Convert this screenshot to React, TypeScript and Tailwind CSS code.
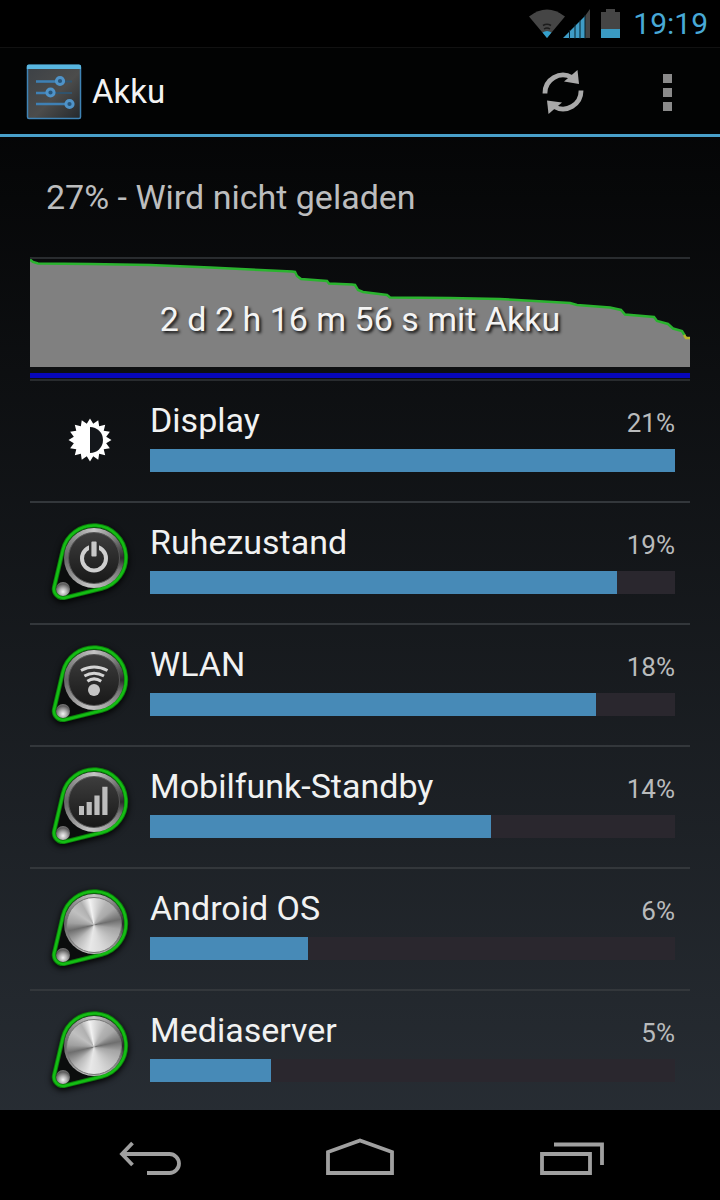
import type { ReactNode } from "react";

type UsageItem = {
  name: string;
  percent: number;
  bar: number;
  icon: ReactNode;
};

const CURVE =
  "0,0.5 3,3 8,4.5 60,5 120,6 180,8.5 230,11 262,12.5 265,13 267,17 271,20 297,22 299,24.5 322,25.5 325,26 328,31 333,33 357,36 360,38.5 420,39 470,40 540,44 547,46 580,48.5 591,51 595,55.5 624,58 627,62 638,65 643,69.5 652,72 655,77";

const GEAR = Array.from({ length: 32 }, (_, i) => {
  const angle = (i * Math.PI) / 16;
  const radius = i % 2 === 0 ? 21.5 : 16.5;
  return `${40 + radius * Math.sin(angle)},${42 - radius * Math.cos(angle)}`;
}).join(" ");

function DisplayIcon() {
  return (
    <svg className="size-20 shrink-0" viewBox="0 0 80 80" aria-hidden="true">
      <polygon points={GEAR} fill="#fff" />
      <path d="M40 29a13 13 0 0 1 0 26z" fill="#14171b" />
    </svg>
  );
}

function KnobIcon({ children }: { children?: ReactNode }) {
  return (
    <div className="relative size-20 shrink-0" aria-hidden="true">
      <svg className="size-20 drop-shadow-[0_2px_3px_#000]" viewBox="0 0 80 80">
        <path
          d="M12.8 30.2A32 32 0 1 1 51.8 68.5L15.2 77.7A9 9 0 0 1 4.2 67Z"
          fill="#0b0d0d"
          stroke="#0b7d0b"
          strokeWidth="4.4"
        />
        <path
          d="M12.8 30.2A32 32 0 1 1 51.8 68.5L15.2 77.7A9 9 0 0 1 4.2 67Z"
          fill="none"
          stroke="#14bd14"
          strokeWidth="2.6"
        />
      </svg>
      <div className="absolute top-[62px] left-[6px] size-[14px] rounded-full bg-[radial-gradient(circle_at_50%_70%,#f4f4f4_0%,#b5b5b5_30%,#5c5c5c_65%,#999_100%)]" />
      <div className="absolute top-[8px] left-[14px] size-[60px] rounded-full bg-[conic-gradient(from_0deg,#c4c4c4_0deg,#8a8a8a_40deg,#2c2c2c_90deg,#777_115deg,#aaa_160deg,#c4c4c4_190deg,#999_225deg,#666_270deg,#8a8a8a_310deg,#c4c4c4_360deg)]" />
      {children ? (
        <>
          <div className="absolute top-[12px] left-[18px] size-[52px] rounded-full border border-[#555] bg-linear-to-b from-[#3d3d3d] to-[#191919]" />
          <svg className="absolute inset-0 size-20" viewBox="0 0 80 80">
            {children}
          </svg>
        </>
      ) : (
        <div className="absolute top-[11px] left-[16px] size-[56px] rounded-full border border-[#777] bg-[conic-gradient(from_0deg,#e0e0e0_0deg,#b4b4b4_30deg,#a8a8a8_50deg,#6e6e6e_78deg,#a5a5a5_100deg,#c0c0c0_130deg,#dcdcdc_165deg,#e8e8e8_190deg,#b8b8b8_225deg,#6e6e6e_257deg,#a0a0a0_275deg,#c0c0c0_305deg,#b0b0b0_330deg,#f2f2f2_350deg,#e0e0e0_360deg)]" />
      )}
    </div>
  );
}

const items: UsageItem[] = [
  { name: "Display", percent: 21, bar: 100, icon: <DisplayIcon /> },
  {
    name: "Ruhezustand",
    percent: 19,
    bar: 89,
    icon: (
      <KnobIcon>
        <circle cx="44" cy="38.5" r="12" fill="none" stroke="#cfcfcf" strokeWidth="4" />
        <rect x="39" y="22" width="10" height="12" fill="#303030" />
        <rect x="41.4" y="21.5" width="5.2" height="15" rx="1" fill="#c8c8c8" />
      </KnobIcon>
    ),
  },
  {
    name: "WLAN",
    percent: 18,
    bar: 85,
    icon: (
      <KnobIcon>
        <g fill="none" stroke="#d4d4d4" strokeWidth="3">
          <path d="M31 28.5Q44 21.5 57.5 28.5" />
          <path d="M34.4 34Q44 28.5 54 34" />
          <path d="M37.4 39.2Q44 34.5 51.2 39.2" />
        </g>
        <circle cx="44" cy="48" r="6" fill="#c4c4c4" />
      </KnobIcon>
    ),
  },
  {
    name: "Mobilfunk-Standby",
    percent: 14,
    bar: 65,
    icon: (
      <KnobIcon>
        <path
          d="M29 42h5v9h-5zM36.6 38h5.2v13h-5.2zM44.4 31.5h5.2V51h-5.2zM52.3 22.7h5.2V51h-5.2z"
          fill="#bdbdbd"
        />
      </KnobIcon>
    ),
  },
  { name: "Android OS", percent: 6, bar: 30, icon: <KnobIcon /> },
  { name: "Mediaserver", percent: 5, bar: 23, icon: <KnobIcon /> },
];

function StatusBar() {
  return (
    <div className="flex h-12 items-center justify-end border-b border-[#111] bg-black pr-3">
      <svg className="h-8 w-[98px]" viewBox="0 0 98 32" aria-hidden="true">
        <path d="M2 8.5Q20 -5.5 38 8.5L20 30Z" fill="#454545" />
        <path d="M16 17.5Q20 15 24 17.5M17 21Q20 19 23 21" fill="none" stroke="#1c1c1c" strokeWidth="1.5" />
        <path d="M15.5 24.5Q20 21.5 24.5 24.5L20 30Z" fill="#33a0cc" />
        <path d="M36 30L58 8V30Z" fill="#3f9cc6" />
        <path d="M58 8L63 1V30H58Z" fill="#454545" />
        <path d="M42.5 22V31M48 16V31M53 12V31M58 7V31" stroke="#06202b" strokeWidth="1" />
        <path d="M74 4H79V1H88V4H93V30H74Z" fill="#454545" />
        <path d="M74 21H93V30H74Z" fill="#3a9ac2" />
      </svg>
      <time className="ml-2 text-[30px] leading-10 text-[#48a9d6]">19:19</time>
    </div>
  );
}

function ActionBar() {
  return (
    <header className="flex h-[89px] items-center border-b-3 border-[#489fc9] bg-[#020303] pt-0.5 pl-[26px]">
      <svg className="size-[56px]" viewBox="0 0 56 56" aria-hidden="true">
        <defs>
          <linearGradient id="panel" x1="0" y1="0" x2="1" y2="1">
            <stop offset="0" stopColor="#3c4146" />
            <stop offset=".55" stopColor="#4c4c4b" />
            <stop offset="1" stopColor="#24282c" />
          </linearGradient>
        </defs>
        <rect x="1.5" y="1.5" width="53" height="53" rx="1.5" fill="url(#panel)" stroke="#3f83b5" strokeWidth="1.5" />
        <path d="M.8 5V2Q.8 .5 2.5 .5H53Q55 .5 55 2V5Z" fill="#58b6e0" />
        <path d="M10 17.5H46M10 29H46M10 40H46" stroke="#31536c" strokeWidth="1.8" />
        <path d="M10 17.5H34M10 29H24M10 40H43" stroke="#3f80b4" strokeWidth="2.6" />
        <g fill="#28557a" stroke="#4f93c8" strokeWidth="3">
          <circle cx="34" cy="17" r="3.6" />
          <circle cx="24.5" cy="28.5" r="3.6" />
          <circle cx="43.5" cy="40" r="3.6" />
        </g>
      </svg>
      <h1 className="ml-2.5 flex-1 text-[33px] leading-10 text-[#f3f3f3]">Akku</h1>
      <button aria-label="Aktualisieren" className="flex h-full w-[105px] items-center justify-center">
        <svg className="h-11 w-[42px]" viewBox="0 0 42 44" aria-hidden="true">
          <path d="M3 23.5A18 18 0 0 1 30 7.500" fill="none" stroke="#a9a9a9" strokeWidth="4.8" />
          <path d="M35.5 0L37 14L22 11.500Z" fill="#a9a9a9" />
          <path d="M39 20.5A18 18 0 0 1 12 36.500" fill="none" stroke="#a9a9a9" strokeWidth="4.8" />
          <path d="M6.5 44L5 30.500L20 32.500Z" fill="#a9a9a9" />
        </svg>
      </button>
      <button aria-label="Weitere Optionen" className="flex h-full w-[105px] flex-col items-center justify-center gap-[5px]">
        <span className="size-[9px] bg-[#8a8a8a]" />
        <span className="size-[9px] bg-[#8a8a8a]" />
        <span className="size-[9px] bg-[#8a8a8a]" />
      </button>
    </header>
  );
}

function HistoryChart() {
  return (
    <div className="relative border-y-2 border-[#292c2f]">
      <svg className="block h-[120px] w-full" viewBox="0 0 660 120" preserveAspectRatio="none" aria-hidden="true">
        <polygon points={`${CURVE} 660,79 660,108 0,108`} fill="#808080" />
        <polyline points={CURVE} fill="none" stroke="#2ab32f" strokeWidth="2.5" />
        <path d="M654 76L656 79H660" fill="none" stroke="#b9b52a" strokeWidth="2.5" />
        <rect y="114" width="660" height="5" fill="#0707bb" />
      </svg>
      <p className="absolute inset-x-0 top-10 text-center text-[34px] leading-10 text-[#f4f4f4] [text-shadow:2px_2px_3px_#111]">
        2 d 2 h 16 m 56 s mit Akku
      </p>
    </div>
  );
}

function UsageRow({ item }: { item: UsageItem }) {
  return (
    <li className="flex gap-5 border-b-2 border-[#33373b] pt-[17px] pr-[15px] pb-[23px] pl-5 last:border-b-0 last:pb-[22px]">
      {item.icon}
      <div className="min-w-0 flex-1 pt-0.5">
        <div className="flex items-baseline justify-between">
          <span className="text-[34px] leading-10 text-[#f1f2f2]">{item.name}</span>
          <span className="text-[26px] leading-10 text-[#b9bbbc]">{item.percent}%</span>
        </div>
        <div className="mt-1.5 h-[23px] bg-[#2a272e]">
          <div className="h-full bg-[#478ab7]" style={{ width: `${item.bar}%` }} />
        </div>
      </div>
    </li>
  );
}

function NavBar() {
  return (
    <nav className="grid h-[90px] grid-cols-3 bg-black px-[45px]">
      <button aria-label="Zurück" className="flex items-center justify-center">
        <svg className="h-10 w-[70px]" viewBox="0 0 70 40" fill="none" stroke="#a0a0a0" strokeWidth="3.8" aria-hidden="true">
          <path d="M7 19H54.5A9.500 9.500 0 0 1 54.5 38H32" />
          <path d="M17.5 8L7 19L17.5 30" />
        </svg>
      </button>
      <button aria-label="Startseite" className="flex items-center justify-center">
        <svg className="h-10 w-[70px]" viewBox="0 0 70 40" fill="none" stroke="#a0a0a0" strokeWidth="3.8" aria-hidden="true">
          <path d="M3 38V17L35 5.500L67 17V38Z" />
        </svg>
      </button>
      <button aria-label="Letzte Apps" className="flex items-center justify-center">
        <svg className="h-10 w-[70px]" viewBox="0 0 70 40" fill="none" stroke="#a0a0a0" strokeWidth="3.8" aria-hidden="true">
          <path d="M7 19H55V38H7ZM19 9.500H67V30" />
        </svg>
      </button>
    </nav>
  );
}

function App() {
  return (
    <div className="flex min-h-screen flex-col bg-linear-to-b/srgb from-black to-[#2a3037] font-[Roboto,sans-serif]">
      <StatusBar />
      <ActionBar />
      <main className="flex-1 px-[30px]">
        <h2 className="px-4 py-10 text-[34px] leading-10 text-[#bcbdbe]">27% - Wird nicht geladen</h2>
        <HistoryChart />
        <ul>
          {items.map((item) => (
            <UsageRow key={item.name} item={item} />
          ))}
        </ul>
      </main>
      <NavBar />
    </div>
  );
}

export default App;
